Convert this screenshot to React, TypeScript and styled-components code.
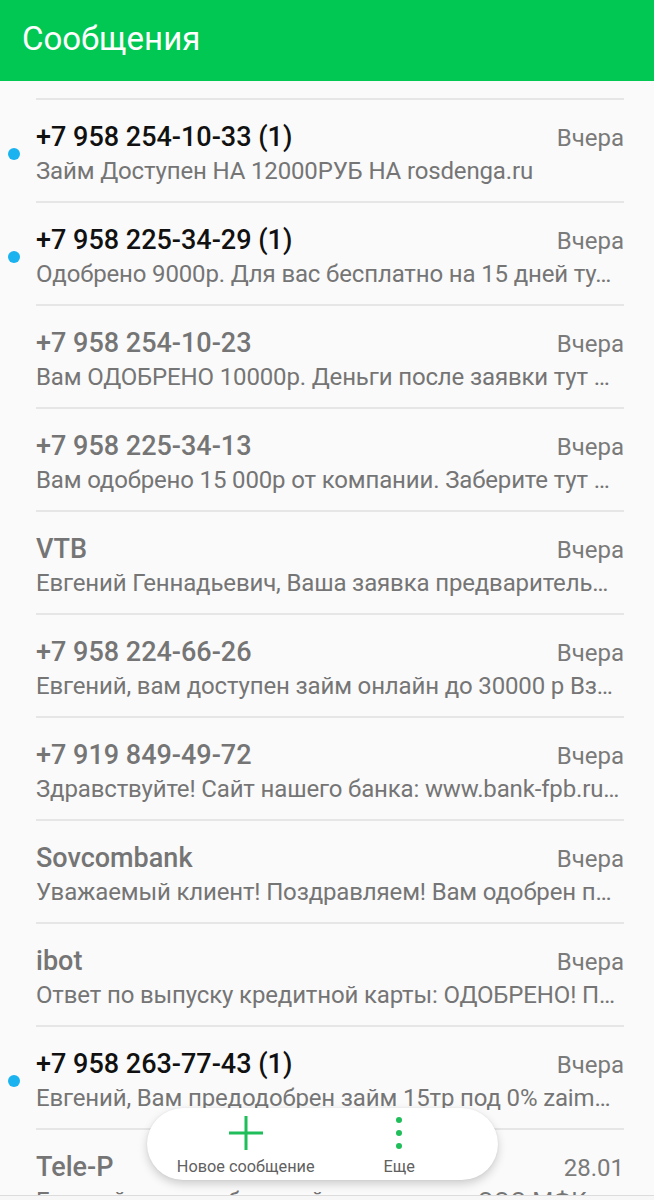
import React from 'react';
import styled, { createGlobalStyle } from 'styled-components';

const GlobalStyle = createGlobalStyle`
  html, body {
    margin: 0;
    padding: 0;
    background: #fafafa;
  }
  body {
    font-family: Roboto, "Noto Sans", "Liberation Sans", sans-serif;
  }
`;

const Screen = styled.div`
  height: 100vh;
  display: flex;
  flex-direction: column;
  overflow: hidden;
  position: relative;
  background: #fafafa;
`;

const AppBar = styled.header`
  height: 81px;
  flex-shrink: 0;
  background: #00c853;
  display: flex;
  align-items: center;
  padding: 0 22px;
  padding-bottom: 4px;
  box-sizing: border-box;
`;

const Title = styled.h1`
  margin: 0;
  color: #ffffff;
  font-size: 33px;
  font-weight: 400;
`;

const List = styled.ul`
  list-style: none;
  margin: 0;
  padding: 17px 30px 0 36px;
  flex: 1;
  overflow: hidden;
`;

const Row = styled.li`
  position: relative;
  border-top: 2px solid #e6e6e6;
  padding: 20px 0 15px;
  display: flex;
  flex-direction: column;
  gap: 2px;
`;

const UnreadDot = styled.span`
  position: absolute;
  left: -28px;
  top: 48px;
  width: 12px;
  height: 12px;
  border-radius: 50%;
  background: #1ab3f0;
`;

const TopLine = styled.div`
  display: flex;
  align-items: baseline;
  justify-content: space-between;
  height: 34px;
`;

const Sender = styled.span<{ $unread?: boolean }>`
  font-size: 27px;
  line-height: 34px;
  font-weight: 500;
  color: ${p => (p.$unread ? '#111111' : '#757575')};
  white-space: nowrap;
`;

const Time = styled.span`
  font-size: 24px;
  line-height: 34px;
  color: #7a7a7a;
`;

const Preview = styled.div`
  font-size: 24px;
  line-height: 30px;
  letter-spacing: -0.15px;
  color: #757575;
  white-space: nowrap;
  overflow: hidden;
  text-overflow: ellipsis;
`;

const Footer = styled.div`
  height: 4px;
  flex-shrink: 0;
  border-top: 1px solid #dcdcdc;
  background: #f7f7f7;
`;

const ActionPill = styled.nav`
  position: absolute;
  left: 147px;
  bottom: 20px;
  width: 351px;
  height: 72px;
  border-radius: 36px;
  background: #ffffff;
  box-shadow: 0 4px 10px rgba(0, 0, 0, 0.18), 0 0 2px rgba(0, 0, 0, 0.08);
  display: grid;
  grid-template-columns: 1fr 1fr;
  padding: 0 22px;
  box-sizing: border-box;
`;

const Action = styled.button`
  border: none;
  background: none;
  padding: 6px 0 0;
  display: flex;
  flex-direction: column;
  align-items: center;
  gap: 5px;
  font-family: inherit;
  font-size: 16.3px;
  color: #616161;
`;

const IconBox = styled.span`
  height: 38px;
  display: flex;
  align-items: center;
  justify-content: center;
`;

const PlusIcon = () => (
  <svg width="36" height="36" viewBox="0 0 36 36">
    <path d="M18 1v34M1 18h34" stroke="#1fbe5a" strokeWidth="3" fill="none" />
  </svg>
);

const MoreIcon = () => (
  <svg width="8" height="36" viewBox="0 0 8 36">
    <circle cx="4" cy="5" r="3" fill="#1fbe5a" />
    <circle cx="4" cy="18" r="3" fill="#1fbe5a" />
    <circle cx="4" cy="31" r="3" fill="#1fbe5a" />
  </svg>
);

type Message = {
  sender: string;
  text: string;
  time: string;
  unread?: boolean;
};

const messages: Message[] = [
  { sender: '+7 958 254-10-33 (1)', text: 'Займ Доступен НА 12000РУБ НА rosdenga.ru', time: 'Вчера', unread: true },
  { sender: '+7 958 225-34-29 (1)', text: 'Одобрено 9000р. Для вас бесплатно на 15 дней ту…', time: 'Вчера', unread: true },
  { sender: '+7 958 254-10-23', text: 'Вам ОДОБРЕНО 10000р. Деньги после заявки тут …', time: 'Вчера' },
  { sender: '+7 958 225-34-13', text: 'Вам одобрено 15 000р от компании. Заберите тут …', time: 'Вчера' },
  { sender: 'VTB', text: 'Евгений Геннадьевич, Ваша заявка предваритель…', time: 'Вчера' },
  { sender: '+7 958 224-66-26', text: 'Евгений, вам доступен займ онлайн до 30000 р Вз…', time: 'Вчера' },
  { sender: '+7 919 849-49-72', text: 'Здравствуйте! Сайт нашего банка: www.bank-fpb.ru…', time: 'Вчера' },
  { sender: 'Sovcombank', text: 'Уважаемый клиент! Поздравляем! Вам одобрен п…', time: 'Вчера' },
  { sender: 'ibot', text: 'Ответ по выпуску кредитной карты: ОДОБРЕНО! П…', time: 'Вчера' },
  { sender: '+7 958 263-77-43 (1)', text: 'Евгений, Вам предодобрен займ 15тр под 0% zaim…', time: 'Вчера', unread: true },
  { sender: 'Tele-P', text: 'Евгений, вам одобрен займ на карту от ООО МФК Ой…', time: '28.01' },
];

export default function App() {
  return (
    <>
      <GlobalStyle />
      <Screen>
        <AppBar>
          <Title>Сообщения</Title>
        </AppBar>

        <List>
          {messages.map((m, i) => (
            <Row key={i}>
              {m.unread && <UnreadDot />}
              <TopLine>
                <Sender $unread={m.unread}>{m.sender}</Sender>
                <Time>{m.time}</Time>
              </TopLine>
              <Preview>{m.text}</Preview>
            </Row>
          ))}
        </List>

        <Footer />

        <ActionPill>
          <Action>
            <IconBox><PlusIcon /></IconBox>
            Новое сообщение
          </Action>
          <Action>
            <IconBox><MoreIcon /></IconBox>
            Еще
          </Action>
        </ActionPill>
      </Screen>
    </>
  );
}
